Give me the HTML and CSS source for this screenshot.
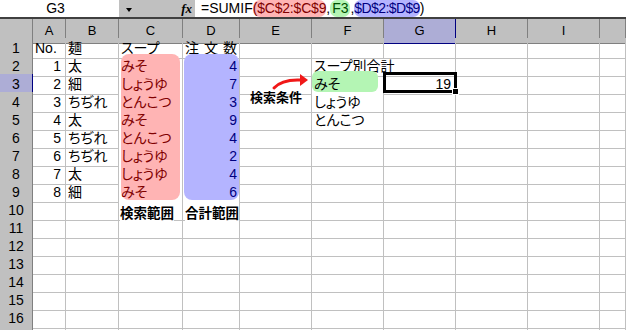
FILE: index.html
```html
<!DOCTYPE html>
<html lang="ja">
<head>
    <meta charset="UTF-8">
    <title>SUMIF</title>
    <link rel="stylesheet" href="styles.css">
</head>
<body>
    <div class="formula-bar">
        <div class="name-box">G3</div>
        <div class="fx-area">
            <span class="dropdown"></span>
            <span class="fx">fx</span>
        </div>
        <div class="formula">=SUMIF<span class="ref ref-c">($C$2:$C$9</span>,<span class="ref ref-f">F3</span>,<span class="ref ref-d">$D$2:$D$9</span>)</div>
    </div>

    <div class="sheet">
        <div class="row head">
            <div></div><div>A</div><div>B</div><div>C</div><div>D</div><div>E</div><div>F</div><div class="sel">G</div><div>H</div><div>I</div><div></div>
        </div>
        <div class="row">
            <div class="rh">1</div><div>No.</div><div>麺</div><div>スープ</div><div class="wide">注文数</div><div></div><div></div><div></div><div></div><div></div><div></div>
        </div>
        <div class="row">
            <div class="rh">2</div><div class="num">1</div><div>太</div><div class="hl red">みそ</div><div class="hl blue num">4</div><div></div><div class="spill">スープ別合計</div><div></div><div></div><div></div><div></div>
        </div>
        <div class="row">
            <div class="rh sel">3</div><div class="num">2</div><div>細</div><div class="hl red">しょうゆ</div><div class="hl blue num">7</div><div></div><div class="hl">みそ</div><div class="num">19</div><div></div><div></div><div></div>
        </div>
        <div class="row">
            <div class="rh">4</div><div class="num">3</div><div>ちぢれ</div><div class="hl red">とんこつ</div><div class="hl blue num">3</div><div></div><div>しょうゆ</div><div></div><div></div><div></div><div></div>
        </div>
        <div class="row">
            <div class="rh">5</div><div class="num">4</div><div>太</div><div class="hl red">みそ</div><div class="hl blue num">9</div><div></div><div>とんこつ</div><div></div><div></div><div></div><div></div>
        </div>
        <div class="row">
            <div class="rh">6</div><div class="num">5</div><div>ちぢれ</div><div class="hl red">とんこつ</div><div class="hl blue num">4</div><div></div><div></div><div></div><div></div><div></div><div></div>
        </div>
        <div class="row">
            <div class="rh">7</div><div class="num">6</div><div>ちぢれ</div><div class="hl red">しょうゆ</div><div class="hl blue num">2</div><div></div><div></div><div></div><div></div><div></div><div></div>
        </div>
        <div class="row">
            <div class="rh">8</div><div class="num">7</div><div>太</div><div class="hl red">しょうゆ</div><div class="hl blue num">4</div><div></div><div></div><div></div><div></div><div></div><div></div>
        </div>
        <div class="row">
            <div class="rh">9</div><div class="num">8</div><div>細</div><div class="hl red">みそ</div><div class="hl blue num">6</div><div></div><div></div><div></div><div></div><div></div><div></div>
        </div>
        <div class="row">
            <div class="rh">10</div><div></div><div></div><div></div><div></div><div></div><div></div><div></div><div></div><div></div><div></div>
        </div>
        <div class="row">
            <div class="rh">11</div><div></div><div></div><div></div><div></div><div></div><div></div><div></div><div></div><div></div><div></div>
        </div>
        <div class="row">
            <div class="rh">12</div><div></div><div></div><div></div><div></div><div></div><div></div><div></div><div></div><div></div><div></div>
        </div>
        <div class="row">
            <div class="rh">13</div><div></div><div></div><div></div><div></div><div></div><div></div><div></div><div></div><div></div><div></div>
        </div>
        <div class="row">
            <div class="rh">14</div><div></div><div></div><div></div><div></div><div></div><div></div><div></div><div></div><div></div><div></div>
        </div>
        <div class="row">
            <div class="rh">15</div><div></div><div></div><div></div><div></div><div></div><div></div><div></div><div></div><div></div><div></div>
        </div>
        <div class="row">
            <div class="rh">16</div><div></div><div></div><div></div><div></div><div></div><div></div><div></div><div></div><div></div><div></div>
        </div>
        <div class="row">
            <div class="rh"></div><div></div><div></div><div></div><div></div><div></div><div></div><div></div><div></div><div></div><div></div>
        </div>

        <!-- 参照範囲のハイライト -->
        <div class="range range-c"></div>
        <div class="range range-d"></div>
        <div class="range range-f"></div>

        <!-- 選択セル G3 -->
        <div class="cursor"></div>
        <div class="handle"></div>

        <svg class="arrow" width="42" height="22" viewBox="0 0 42 22">
            <path d="M4 18 Q12 9 31 10" fill="none" stroke="#f01818" stroke-width="3" stroke-linecap="round"/>
            <polygon points="30,4 38,10 30,16" fill="#f01818"/>
        </svg>
        <div class="note note-cond">検索条件</div>
        <div class="note note-c">検索範囲</div>
        <div class="note note-d">合計範囲</div>
    </div>
</body>
</html>
```

FILE: styles.css
```css
body {
    margin: 0;
    font-family: "Liberation Sans", "Noto Sans CJK JP", sans-serif;
    font-size: 14px;
    color: #000;
    background: #fff;
    overflow: hidden;
}

/* 数式バー */
.formula-bar {
    display: flex;
    height: 17px;
    line-height: 17px;
    border-bottom: 2px solid #404040;
}
.name-box {
    width: 111px;
    padding-right: 8px;
    text-align: center;
}
.fx-area {
    width: 76px;
    display: flex;
    align-items: center;
    background: #c0c0c0;
}
.dropdown {
    width: 0;
    height: 0;
    margin: 3px 0 0 7px;
    border-left: 3px solid transparent;
    border-right: 3px solid transparent;
    border-top: 4px solid #000;
}
.fx {
    margin-left: auto;
    margin-right: 3px;
    font-family: "Liberation Serif", serif;
    font-style: italic;
    font-weight: bold;
    font-size: 13px;
}
.formula {
    padding-left: 6px;
    white-space: nowrap;
}
.ref {
    display: inline-block;
    border-radius: 7px;
}
.ref-c { background: #ffb4b4; color: #800000; letter-spacing: -0.2px; }
.ref-f { background: #b4f5b4; color: #005000; padding: 0 2px; }
.ref-d { background: #b4b4ff; color: #000080; letter-spacing: -0.6px; }

/* シート */
.sheet {
    position: relative;
}
.row {
    display: grid;
    grid-template-columns: 33px 33px 53px 64px 57px 72px 72px 72px 72px 72px 1fr;
    height: 18px;
}
.row > div {
    box-sizing: border-box;
    padding: 0 2px;
    border-right: 1px solid #c0c0c0;
    border-bottom: 1px solid #c0c0c0;
    line-height: 20px;
    white-space: nowrap;
    font-feature-settings: "palt";
}
.row > .rh {
    padding: 0;
    background: #c0c0c0;
    border-color: #808080;
    text-align: center;
}
.row > .rh.sel {
    background: #adadd6;
    border-right-color: #000080;
}
.head {
    height: 19px;
}
.head > div {
    padding: 0;
    background: #c0c0c0;
    border-color: #808080;
    text-align: center;
    font-size: 13px;
    line-height: 24px;
}
.row > .sel {
    background: #adadd6;
    border-right-color: #000080;
    border-bottom-color: #000080;
}
.row > .num {
    text-align: right;
    padding-right: 4px;
}
.row > .hl {
    position: relative;
    z-index: 2;
    border-bottom-color: transparent;
}
.row > .spill {
    border-right-color: transparent;
}
.red { color: #800000; }
.row > .blue { color: #000080; padding-right: 2px; }
.wide { letter-spacing: 5px; }

.range {
    position: absolute;
    z-index: 1;
}
.range-c {
    left: 121px;
    top: 35px;
    width: 59px;
    height: 146px;
    background: #ffb4b4;
    border-radius: 8px;
}
.range-d {
    left: 184px;
    top: 35px;
    width: 55px;
    height: 146px;
    background: #b4b4ff;
    border-radius: 8px;
}
.range-f {
    left: 312px;
    top: 52px;
    width: 66px;
    height: 21px;
    background: #b4f5b4;
    border-radius: 6px;
}
.cursor {
    position: absolute;
    z-index: 3;
    left: 383px;
    top: 53px;
    width: 74px;
    height: 21px;
    box-sizing: border-box;
    border: 3px solid #000;
}
.handle {
    position: absolute;
    z-index: 4;
    left: 452px;
    top: 69px;
    width: 5px;
    height: 5px;
    background: #000;
    border: 1px solid #fff;
}
.arrow {
    position: absolute;
    z-index: 3;
    left: 270px;
    top: 51px;
}
.note {
    position: absolute;
    z-index: 3;
    font-weight: bold;
    line-height: 15px;
    background: #fff;
}
.note-cond { left: 250px; top: 71px; font-size: 13px; background: none; }
.note-c { left: 120px; top: 187px; font-size: 13.5px; }
.note-d { left: 185px; top: 187px; font-size: 13.5px; }
```
